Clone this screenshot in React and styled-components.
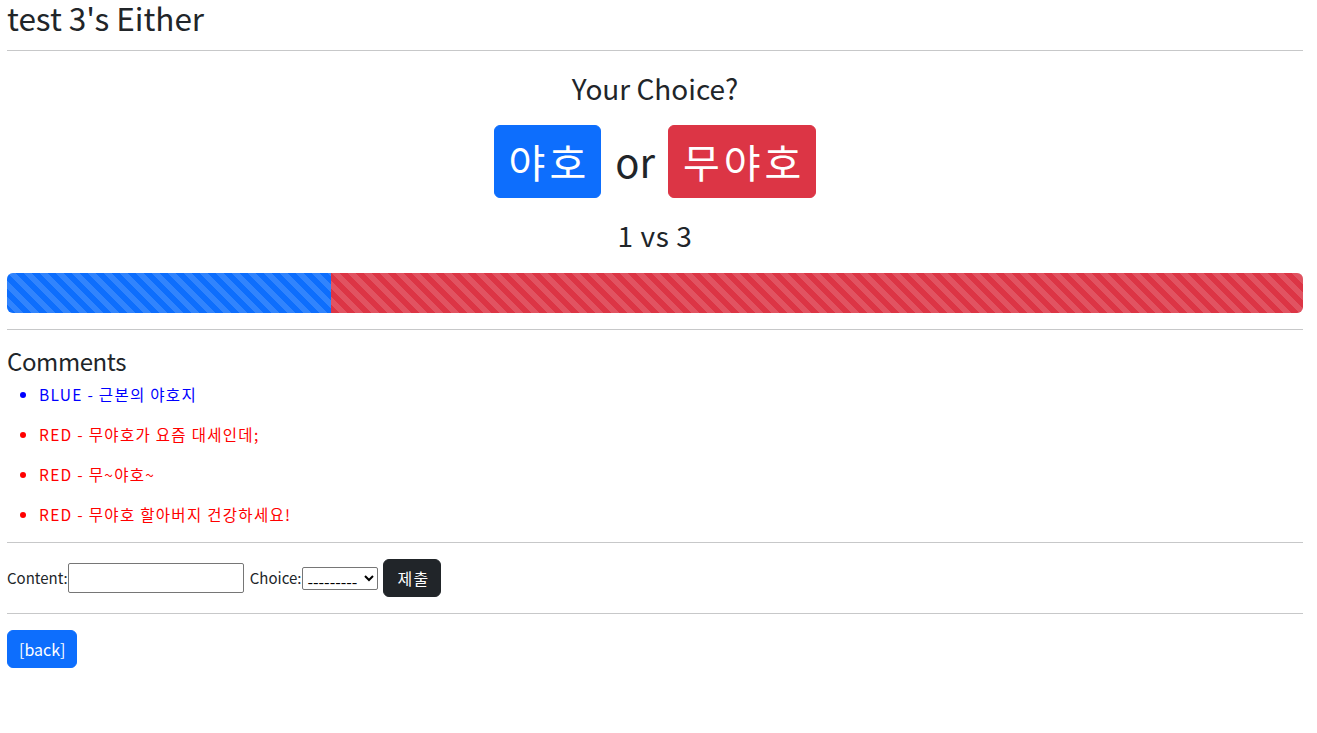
import React from "react";
import styled, { createGlobalStyle } from "styled-components";

const comments = [
  { side: "BLUE", text: "근본의 야호지" },
  { side: "RED", text: "무야호가 요즘 대세인데;" },
  { side: "RED", text: "무~야호~" },
  { side: "RED", text: "무야호 할아버지 건강하세요!" },
];

const blueVotes = 1;
const redVotes = 3;

export default function App() {
  const total = blueVotes + redVotes;
  const bluePct = (blueVotes / total) * 100;

  return (
    <>
      <GlobalStyle />
      <Container>
        <Title>test 3's Either</Title>
        <Rule />
        <Center>
          <Question>Your Choice?</Question>
          <ChoiceRow>
            <BigButton color="#0d6efd">야호</BigButton>
            <Or>or</Or>
            <BigButton color="#dc3545">무야호</BigButton>
          </ChoiceRow>
          <Score>
            {blueVotes} vs {redVotes}
          </Score>
        </Center>
        <Progress>
          <Bar color="#0d6efd" style={{ width: `${bluePct}%` }} />
          <Bar color="#dc3545" style={{ width: `${100 - bluePct}%` }} />
        </Progress>
        <Rule />
        <SubTitle>Comments</SubTitle>
        <List>
          {comments.map((c, i) => (
            <Item key={i} color={c.side === "BLUE" ? "#0000ff" : "#ff0000"}>
              <p>
                {c.side} - {c.text}
              </p>
            </Item>
          ))}
        </List>
        <Rule />
        <Form onSubmit={(e) => e.preventDefault()}>
          <label>Content:</label>
          <TextInput type="text" />
          <label>Choice:</label>
          <Select defaultValue="">
            <option value="">---------</option>
            <option value="blue">BLUE</option>
            <option value="red">RED</option>
          </Select>
          <SmallButton color="#212529" $ko>
            제출
          </SmallButton>
        </Form>
        <Rule />
        <SmallButton color="#0d6efd">[back]</SmallButton>
      </Container>
    </>
  );
}

const GlobalStyle = createGlobalStyle`
  body {
    margin: 0;
    font-family: "Noto Sans CJK KR", "Noto Sans", sans-serif;
    font-size: 16px;
    line-height: 1.5;
    color: #212529;
    background: #fff;
  }
  p { margin: 0 0 16px; }
`;

const Container = styled.div`
  width: 1296px;
  margin-left: 7px;
`;

const Title = styled.div`
  font-size: 31.5px;
  line-height: 34px;
`;

const Rule = styled.hr`
  margin: 16px 0;
  border: 0;
  border-top: 1px solid #212529;
  opacity: 0.25;
`;

const Center = styled.div`
  text-align: center;
  padding-top: 4px;
`;

const Question = styled.div`
  font-size: 28px;
  line-height: 34px;
`;

const ChoiceRow = styled.div`
  display: flex;
  justify-content: center;
  align-items: baseline;
  margin-top: 20px;
`;

const BigButton = styled.button`
  font-family: inherit;
  font-size: 40px;
  line-height: 59px;
  letter-spacing: 4px;
  padding: 6px 10px 6px 14px;
  border: 1px solid ${(p) => p.color};
  border-radius: 6px;
  background: ${(p) => p.color};
  color: #fff;
  cursor: pointer;
`;

const Or = styled.span`
  font-size: 40px;
  margin: 0 13px 0 14px;
`;

const Score = styled.div`
  font-size: 28px;
  line-height: 34px;
  letter-spacing: 0.6px;
  margin-top: 20px;
`;

const Progress = styled.div`
  display: flex;
  height: 40px;
  margin-top: 21px;
  border-radius: 6px;
  overflow: hidden;
  background: #e9ecef;
`;

const Bar = styled.div`
  height: 100%;
  background-color: ${(p) => p.color};
  background-image: linear-gradient(
    45deg,
    rgba(255, 255, 255, 0.15) 25%,
    transparent 25%,
    transparent 50%,
    rgba(255, 255, 255, 0.15) 50%,
    rgba(255, 255, 255, 0.15) 75%,
    transparent 75%,
    transparent
  );
  background-size: 16px 16px;
`;

const SubTitle = styled.div`
  font-size: 24px;
  line-height: 29px;
  letter-spacing: -0.4px;
  margin-bottom: 7px;
`;

const List = styled.ul`
  margin: 0;
  padding-left: 32px;
`;

const Item = styled.li`
  color: ${(p) => p.color};
  font-size: 15.5px;
  line-height: 24px;
  letter-spacing: 1.3px;
`;

const Form = styled.form`
  display: flex;
  align-items: center;
  height: 38px;
  font-size: 15px;
`;

const TextInput = styled.input`
  width: 176px;
  height: 30px;
  box-sizing: border-box;
  border: 1px solid #767676;
  border-radius: 2px;
  margin-right: 6px;
  font: inherit;
`;

const Select = styled.select`
  width: 76px;
  height: 23px;
  box-sizing: border-box;
  border: 1px solid #767676;
  border-radius: 2px;
  font-family: inherit;
  font-size: 16px;
  margin-left: 1px;
  margin-right: 5px;
  background: #fff;
  color: #000;
`;

const SmallButton = styled.button`
  font-family: inherit;
  font-size: 16px;
  line-height: 24px;
  letter-spacing: ${(p) => (p.$ko ? "1.3px" : "0")};
  padding: ${(p) => (p.$ko ? "6px 11px 6px 13px" : "6px 11px")};
  border: 1px solid ${(p) => p.color};
  border-radius: 6px;
  background: ${(p) => p.color};
  color: #fff;
  cursor: pointer;
`;
